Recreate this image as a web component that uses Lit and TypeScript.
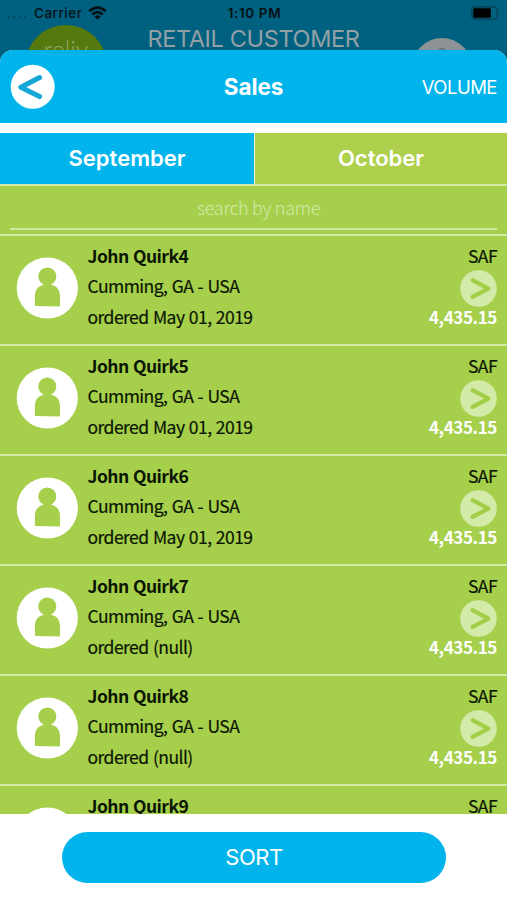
import { LitElement, html, css } from "lit";
import { customElement, property } from "lit/decorators.js";

interface Sale {
  name: string;
  place: string;
  ordered: string;
  kind: string;
  volume: string;
}

const sales: Sale[] = [4, 5, 6, 7, 8, 9].map((n) => ({
  name: `John Quirk${n}`,
  place: "Cumming, GA - USA",
  ordered: n < 7 ? "May 01, 2019" : "(null)",
  kind: "SAF",
  volume: "4,435.15",
}));

@customElement("status-bar")
export class StatusBar extends LitElement {
  static styles = css`
    :host {
      display: grid;
      grid-template-columns: 1fr auto 1fr;
      align-items: center;
      height: 26px;
      padding: 0 6px 0 8px;
      font: 500 13.5px/26px Inter, sans-serif;
      color: #061015;
    }
    .left { display: flex; align-items: center; letter-spacing: 0.5px; }
    .dots { display: flex; gap: 3.3px; width: 26px; padding-top: 8px; box-sizing: border-box; }
    .dots i { width: 2px; height: 2px; border-radius: 50%; background: #034258; }
    .wifi { margin-left: 5.5px; }
    .time { font-weight: 600; font-size: 13.5px; letter-spacing: 0.6px; }
    .battery { justify-self: end; }
    svg { display: block; }
  `;

  render() {
    return html`
      <div class="left">
        <span class="dots"><i></i><i></i><i></i><i></i></span>
        <span>Carrier</span>
        <svg class="wifi" width="19" height="14" viewBox="0 0 19 14">
          <g fill="none" stroke="#061015" stroke-width="2.6">
            <path d="M1.2 5.2 Q9.5 -2 17.8 5.2" />
            <path d="M4.2 8.5 Q9.5 3.8 14.8 8.5" />
          </g>
          <path d="M6.4 10.6 Q9.5 8 12.6 10.6 L9.5 13.6 Z" fill="#061015" />
        </svg>
      </div>
      <span class="time">1:10 PM</span>
      <svg class="battery" width="30" height="14" viewBox="0 0 30 14">
        <rect x="0.8" y="0.8" width="25.4" height="12.4" rx="3.4" fill="none" stroke="#043f54" stroke-width="1.2" />
        <rect x="2.3" y="2.3" width="17.6" height="9.4" rx="1.2" fill="#000" />
        <path d="M27.6 5 Q29.4 7 27.6 9 Z" fill="#043f54" />
      </svg>
    `;
  }
}

@customElement("sale-row")
export class SaleRow extends LitElement {
  @property({ attribute: false }) sale!: Sale;

  static styles = css`
    :host {
      display: flex;
      flex: none;
      box-sizing: border-box;
      height: 110px;
      padding: 4.5px 10px 0 16px;
      border-top: 2px solid #d3e9a6;
      font: 17.5px/30.5px "Noto Sans CJK SC", sans-serif;
      letter-spacing: -0.55px;
      word-spacing: 1px;
      color: #0b1503;
      -webkit-text-stroke: 0.2px currentColor;
    }
    .avatar { display: block; flex: none; margin: 16.5px 9.5px 0 0; }
    .info { flex: 1; white-space: nowrap; }
    .info div { height: 30.5px; }
    .name { font-weight: 700; -webkit-text-stroke: 0; }
    .side { display: flex; flex-direction: column; align-items: flex-end; }
    .kind { height: 29.5px; }
    .go { display: block; flex: none; }
    .volume { margin-top: -5px; font-size: 17px; letter-spacing: -0.4px; font-weight: 700; color: #fff; -webkit-text-stroke: 0; }
  `;

  render() {
    const s = this.sale;
    return html`
      <svg class="avatar" width="62" height="62" viewBox="0 0 62 62">
        <circle cx="31.3" cy="31" r="30.6" fill="#fff" />
        <circle cx="31.3" cy="19.4" r="9" fill="#a6d04c" />
        <path
          d="M27.4 25 H35.4 V27.9 C41 28.6 44 33 44 39.5 V48.3 Q44 49.5 42.8 49.5 L20.1 49.1 Q18.9 49.1 18.9 47.9 V39.5 C18.9 33 21.8 28.6 27.4 27.9 Z"
          fill="#a6d04c"
        />
      </svg>
      <div class="info">
        <div class="name">${s.name}</div>
        <div>${s.place}</div>
        <div>ordered ${s.ordered}</div>
      </div>
      <div class="side">
        <span class="kind">${s.kind}</span>
        <svg class="go" width="37" height="37" viewBox="0 0 37 37">
          <circle cx="18.5" cy="18.5" r="18.3" fill="#d3eaa9" />
          <path d="M12.6 10.2 L28.4 18.6 L12.6 26.8" fill="none" stroke="#a3ce47" stroke-width="4.2" stroke-linecap="round" stroke-linejoin="round" />
        </svg>
        <span class="volume">${s.volume}</span>
      </div>
    `;
  }
}

@customElement("app-root")
export class AppRoot extends LitElement {
  static styles = css`
    :host {
      display: flex;
      flex-direction: column;
      width: 507px;
      height: 900px;
      overflow: hidden;
      background: #00607f;
      font-family: Inter, sans-serif;
      color: #fff;
    }
    .behind { position: relative; flex: none; height: 50px; overflow: hidden; }
    .brand {
      position: absolute;
      left: 25px;
      top: 25px;
      width: 82px;
      height: 82px;
      border-radius: 50%;
      background: #56790f;
      color: #93a664;
      text-align: center;
      font: 300 25px/48px Lato, sans-serif;
    }
    .backdrop-title {
      position: absolute;
      left: 0;
      right: 0;
      top: 24px;
      text-align: center;
      font: 400 23.5px/30px Inter, sans-serif;
      letter-spacing: -0.35px;
      color: #93a0a6;
    }
    .menu {
      position: absolute;
      left: 412px;
      top: 38px;
      width: 60px;
      height: 60px;
      border-radius: 50%;
      background: #8c9295;
    }
    .menu i { display: block; width: 6px; height: 2px; margin: 10px auto 0; background: #647a80; border-radius: 1px; }
    .sheet {
      flex: 1;
      min-height: 0;
      display: flex;
      flex-direction: column;
      background: #fff;
      border-radius: 13px 13px 0 0;
      overflow: hidden;
    }
    header {
      flex: none;
      display: grid;
      grid-template-columns: 1fr auto 1fr;
      align-items: center;
      height: 73px;
      padding: 0 10px;
      background: #01b4eb;
    }
    header svg { display: block; }
    h1 { margin: 0; font-size: 22.5px; line-height: 30px; font-weight: 700; letter-spacing: -0.1px; }
    .action { justify-self: end; font-size: 18.5px; letter-spacing: -0.5px; }
    .tabs { flex: none; display: grid; grid-template-columns: 254px 1fr; height: 51px; margin-top: 10px; }
    .tab {
      display: grid;
      place-items: center;
      padding-bottom: 1px;
      font-size: 22px;
      font-weight: 600;
      letter-spacing: 0;
      background: #afd04d;
      border-left: 1px solid #f0f7de;
    }
    .tab.active { background: #01b4eb; border: 0; }
    .search {
      flex: none;
      box-sizing: border-box;
      height: 50px;
      padding: 0 10px;
      background: #a6d04c;
      border-top: 2px solid #d3e9a6;
    }
    .field {
      height: 42px;
      padding-left: 10px;
      border-bottom: 2px solid #cfe6a4;
      text-align: center;
      font: 300 18px/43px "Noto Sans CJK SC", sans-serif;
      letter-spacing: -0.3px;
      color: #d3e8ac;
    }
    .list { flex: 1; min-height: 0; display: flex; flex-direction: column; overflow: hidden; background: #a6d04c; }
    footer { flex: none; height: 86px; box-sizing: border-box; padding: 18px 61px 0 62px; }
    .sort {
      display: block;
      width: 100%;
      height: 51px;
      border: 0;
      border-radius: 26px;
      background: #01b4eb;
      color: #fff;
      font: 400 22px/51px Inter, sans-serif;
      letter-spacing: -0.5px;
      padding: 0;
    }
  `;

  render() {
    return html`
      <div class="behind">
        <status-bar></status-bar>
        <div class="brand">reliv</div>
        <div class="backdrop-title">RETAIL CUSTOMER</div>
        <div class="menu"><i></i></div>
      </div>
      <div class="sheet">
        <header>
          <svg width="45" height="45" viewBox="0 0 45 45">
            <circle cx="22.7" cy="22.8" r="22" fill="#fff" />
            <path d="M29.6 13.6 L10.8 23.2 L29.6 32.6" fill="none" stroke="#16a7d9" stroke-width="5" stroke-linecap="round" stroke-linejoin="round" />
          </svg>
          <h1>Sales</h1>
          <span class="action">VOLUME</span>
        </header>
        <div class="tabs">
          <div class="tab active">September</div>
          <div class="tab">October</div>
        </div>
        <div class="search"><div class="field">search by name</div></div>
        <div class="list">${sales.map((s) => html`<sale-row .sale=${s}></sale-row>`)}</div>
        <footer><button class="sort">SORT</button></footer>
      </div>
    `;
  }
}
